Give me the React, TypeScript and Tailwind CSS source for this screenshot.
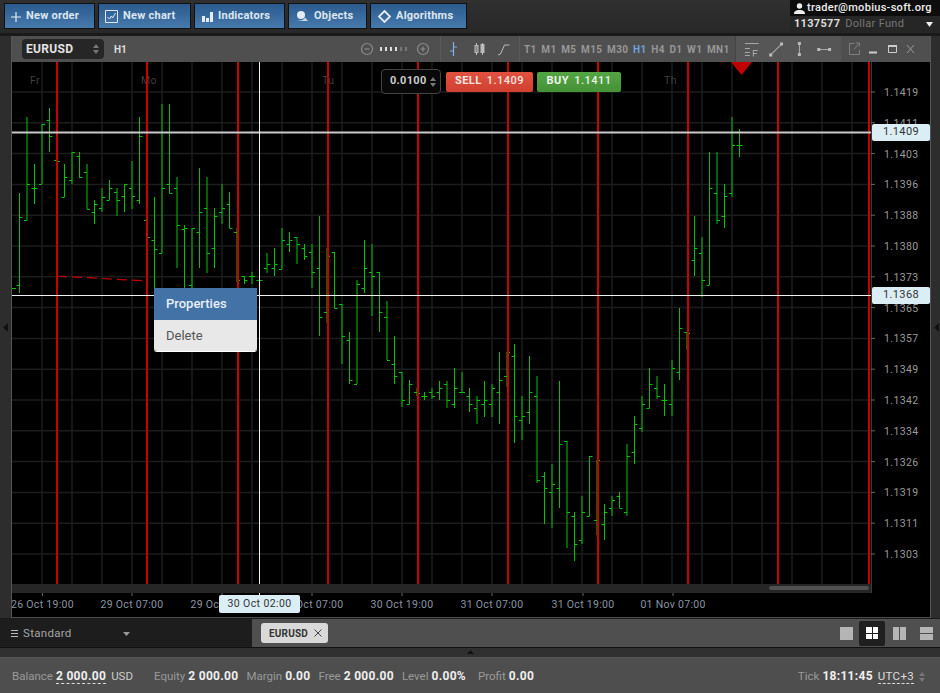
import type { ReactNode } from "react";

// [high, low, open, close] in screen pixels, one bar every 7.5px from x=19.5
const BARS: number[][] = [
  [193, 293, 285, 217], [117, 220, 220, 184], [164, 204, 188, 188], [124, 184, 184, 124], [108, 152, 120, 136],
  [140, 190, 160, 161], [164, 197, 197, 177], [152, 184, 180, 152], [152, 178, 156, 177], [164, 209, 172, 209],
  [200, 224, 212, 204], [188, 212, 208, 197], [180, 200, 200, 188], [188, 216, 192, 200], [184, 212, 196, 184],
  [161, 209, 188, 196], [117, 204, 200, 136], [200, 250, 220, 237], [197, 290, 240, 249], [104, 253, 253, 188],
  [104, 193, 184, 193], [177, 268, 188, 225], [225, 290, 229, 228], [228, 290, 285, 228], [168, 268, 232, 212],
  [177, 273, 208, 253], [208, 268, 248, 216], [184, 224, 212, 208], [192, 228, 204, 228], [228, 282, 232, 280],
  [276, 284, 276, 280], [272, 284, 276, 276], [279, 281, 280, 280], [253, 273, 268, 264], [248, 276, 268, 264],
  [228, 269, 269, 240], [232, 252, 244, 240], [237, 264, 237, 244], [244, 260, 248, 256], [244, 288, 252, 272],
  [216, 336, 268, 317], [248, 323, 312, 256], [252, 308, 252, 308], [304, 364, 304, 336], [332, 384, 340, 380],
  [280, 384, 384, 284], [240, 293, 288, 268], [244, 316, 272, 276], [272, 332, 272, 312], [301, 360, 317, 360],
  [336, 384, 364, 376], [372, 407, 372, 400], [380, 404, 404, 384], [388, 396, 392, 393], [392, 400, 396, 396],
  [388, 399, 392, 396], [381, 400, 392, 388], [381, 408, 384, 400], [368, 408, 404, 388], [372, 392, 392, 392],
  [388, 412, 396, 404], [396, 424, 408, 400], [381, 417, 404, 400], [384, 417, 404, 388], [352, 424, 392, 380],
  [352, 387, 376, 352], [344, 443, 356, 416], [396, 440, 420, 416], [356, 424, 412, 392], [376, 483, 396, 480],
  [472, 524, 476, 488], [464, 528, 492, 484], [381, 508, 488, 444], [441, 548, 441, 512], [512, 561, 516, 544],
  [496, 544, 540, 512], [456, 516, 516, 456], [460, 535, 520, 460], [504, 540, 524, 512], [496, 516, 508, 500],
  [492, 508, 496, 508], [444, 516, 512, 456], [416, 464, 452, 424], [396, 432, 428, 404], [368, 408, 408, 384],
  [376, 399, 388, 396], [384, 416, 400, 400], [360, 416, 404, 368], [308, 380, 372, 328], [332, 350, 332, 333],
  [216, 276, 260, 248], [237, 297, 253, 280], [152, 285, 285, 188], [152, 224, 193, 220], [184, 228, 216, 196],
  [117, 197, 193, 145], [129, 157, 145, 145],
];

const RED_LINES = [57, 147, 238, 328, 418, 508, 598, 688, 778, 869];
const V_GRID = Array.from({ length: 28 }, (_, i) => 42 + i * 30);
const PRICES = ["1.1419", "1.1411", "1.1403", "1.1396", "1.1388", "1.1380", "1.1373", "1.1365", "1.1357", "1.1349", "1.1342", "1.1334", "1.1326", "1.1319", "1.1311", "1.1303"];
const TIMES: [number, string][] = [
  [42.5, "26 Oct 19:00"], [132, "29 Oct 07:00"], [222, "29 Oct 19:00"], [312, "30 Oct 07:00"],
  [402, "30 Oct 19:00"], [492, "31 Oct 07:00"], [583, "31 Oct 19:00"], [673, "01 Nov 07:00"],
];
const TIMEFRAMES = ["T1", "M1", "M5", "M15", "M30", "H1", "H4", "D1", "W1", "MN1"];

function priceY(i: number) {
  return 92 + i * 30.8;
}

function TopButton({ icon, label, width }: { icon: ReactNode; label: string; width: string }) {
  return (
    <button className={`flex h-[26px] ${width} items-center gap-[5px] border border-[#111] bg-gradient-to-b from-[#2a5a8e] to-[#477aac] pl-[6px] text-[11px] font-bold tracking-[0.25px] text-[#dde6f0]`}>
      {icon}
      <span className="pt-px">{label}</span>
    </button>
  );
}

function Updown({ className = "" }: { className?: string }) {
  return (
    <svg width="6" height="12" viewBox="0 0 6 12" className={className}>
      <path d="M0 5l3-4 3 4z M0 7l3 4 3-4z" fill="#777" />
    </svg>
  );
}

function TitleBar() {
  return (
    <div className="flex h-[26px] items-center bg-[#4f4f4f] text-[10px] font-bold">
      <div className="ml-[10px] flex h-[20px] w-[82px] items-center justify-between rounded-[4px] bg-[#262626] pl-[4px] pr-[5px] text-[12px] tracking-[0.3px] text-[#e2e2e2]">
        EURUSD
        <Updown />
      </div>
      <span className="ml-[10px] w-[247px] text-[#ddd]">H1</span>
      <svg width="72" height="16" viewBox="0 0 72 16" className="w-[72px]">
        <g fill="none" stroke="#8c8c8c" strokeWidth="1.2">
          <circle cx="6" cy="8" r="5.5" />
          <path d="M3.5 8h5" />
          <circle cx="62" cy="8" r="5.5" />
          <path d="M59.5 8h5M62 5.5v5" />
        </g>
        <path d="M19 6h2v4h-2zM24 6h2v4h-2zM29 6h2v4h-2zM34 6h2v4h-2z" fill="#ddd" />
        <path d="M39 6h2v4h-2zM44 6h2v4h-2z" fill="#777" />
      </svg>
      <div className="ml-[7px] h-full w-px bg-[#5a5a5a]" />
      <svg width="78" height="18" viewBox="2 0 78 18" className="w-[78px]">
        <path d="M14.5 2v14M11 11h3.500M14.500 7H18" stroke="#7fb2e5" strokeWidth="1.2" fill="none" />
        <g stroke="#bbb" fill="none">
          <path d="M37.5 3v12M43.5 3v12" />
          <rect x="36" y="5.500" width="3" height="7" fill="#888" />
          <rect x="42" y="4.500" width="3" height="8" fill="#bbb" />
          <path d="M59 15l2.500-1 4-9h5" strokeWidth="1" />
        </g>
      </svg>
      <div className="flex h-full w-[216px] items-center gap-[4.7px] border-l border-[#5a5a5a] bg-[#4f4f4f] pl-[4px] tracking-[0.35px] text-[#979797]">
        {TIMEFRAMES.map((t) => (
          <span key={t} className={t === "H1" ? "text-[#6ea4dc]" : ""}>
            {t}
          </span>
        ))}
      </div>
      <div className="flex h-full w-[106px] items-center border-l border-[#444] bg-[#565656]">
        <svg width="106" height="18" viewBox="0 0 106 18">
          <g stroke="#aaa" fill="none">
            <path d="M9 3.500h14M9 8.500h5M9 12.500h5M9 15.500h5" strokeWidth="1" />
            <path d="M35 15L46 4" strokeWidth="1.1" />
            <path d="M64 4v10M84 9.500h10" strokeWidth="1.1" />
          </g>
          <path d="M17 10h5v1h-4v2h3v1h-3v2.500h-1z" fill="#aaa" />
          <path d="M33.500 13.500h3v3h-3zM44.500 2.500h3v3h-3zM62.500 2h3v3h-3zM62.500 13h3v3h-3zM82 8h3v3h-3zM93 8h3v3h-3z" fill="#bbb" />
        </svg>
      </div>
      <div className="flex h-full w-[88px] items-center bg-[#4f4f4f]">
        <svg width="80" height="18" viewBox="0 0 80 18">
          <g stroke="#808080" fill="none" strokeWidth="1">
            <path d="M13.500 3.500h-5v11h10v-5" />
            <path d="M13 9.500l5-6M15 3h3.500v3.500" />
            <path d="M66 5l7 8M73 5l-7 8" stroke="#999" />
          </g>
          <path d="M28 11.500h8v2h-8z" fill="#ccc" />
          <path d="M47.500 5.500h8v7h-8z" fill="none" stroke="#ccc" />
          <path d="M47 5h9v2h-9z" fill="#ccc" />
        </svg>
      </div>
    </div>
  );
}

function Chart() {
  return (
    <svg
      width="918"
      height="556"
      viewBox="12 62 918 556"
      className="block"
      fontFamily="Roboto, sans-serif"
      fontSize="10.500"
      letterSpacing="0.4"
    >
      <rect x="12" y="62" width="918" height="556" fill="#000" />
      <g stroke="#1d1d1d" strokeWidth="1.500">
        {V_GRID.map((x) => (
          <line key={x} x1={x} x2={x} y1="62" y2="584" />
        ))}
        {PRICES.map((p, i) => (
          <line key={p} x1="12" x2="871" y1={priceY(i)} y2={priceY(i)} />
        ))}
      </g>
      <g fill="#3f3f3f">
        <text x="30" y="84">Fr</text>
        <text x="141" y="84">Mo</text>
        <text x="322" y="84">Tu</text>
        <text x="664" y="84">Th</text>
      </g>
      <g stroke="#00c400" fill="none">
        {BARS.map(([hi, lo, o, c], i) => {
          const x = 19.5 + i * 7.5;
          return (
            <path
              key={i}
              d={`M${x} ${hi}V${lo}M${x - 3} ${o + 0.5}H${x}M${x} ${c + 0.5}H${x + 3}`}
            />
          );
        })}
        <path d="M12 288.500H16" />
      </g>
      <g stroke="#c80000" strokeWidth="2">
        {RED_LINES.map((x) => (
          <line key={x} x1={x} x2={x} y1="62" y2="584" />
        ))}
      </g>
      <path d="M57 276L147 281" stroke="#c80000" strokeWidth="1.200" strokeDasharray="10 5" />
      <path d="M731 62h21l-10.500 13z" fill="#c00000" />
      <path d="M12 132.500H871" stroke="#c9c9c9" strokeWidth="2" />
      <path d="M12 295.500H871M259.500 62V595" stroke="#f0f0f0" />
      <rect x="12" y="584" width="859" height="9" fill="#262626" />
      <rect x="769" y="586" width="100" height="4" rx="2" fill="#505050" />
      <path d="M871.500 62V593" stroke="#3a3a3a" />
      <g stroke="#666">
        {PRICES.map((p, i) => (
          <line key={p} x1="871" x2="875" y1={priceY(i)} y2={priceY(i)} />
        ))}
        {TIMES.map(([x]) => (
          <line key={x} x1={x} x2={x} y1="593" y2="596" />
        ))}
      </g>
      <g fill="#9a9a9a">
        {PRICES.map((p, i) => (
          <text key={p} x="884" y={priceY(i) + 4}>{p}</text>
        ))}
      </g>
      <g fill="#8795a3" textAnchor="middle" letterSpacing="0.3">
        {TIMES.map(([x, t]) => (
          <text key={t} x={x} y="608">{t}</text>
        ))}
      </g>
      <path d="M12 617.500H930" stroke="#4a4a4a" />
    </svg>
  );
}

function PriceTag({ value, top }: { value: string; top: string }) {
  return (
    <div className={`absolute left-[860px] ${top} flex h-[17px] w-[58px] items-center justify-center rounded-[2px] bg-[#dceef5] text-[11px] tracking-[0.4px] text-[#333]`}>
      {value}
    </div>
  );
}

function StatusItem({ label, value, dashed, suffix }: { label: string; value: string; dashed?: boolean; suffix?: string }) {
  return (
    <span className="flex items-baseline gap-[3px]">
      <span className="text-[#999]">{label}</span>
      <span className={`text-[12px] font-bold tracking-[0.3px] text-[#eee] ${dashed ? "border-b border-dashed border-[#ddd] leading-[13px]" : ""}`}>
        {value}
      </span>
      {suffix ? <span className="ml-[2px] text-[#ccc]">{suffix}</span> : null}
    </span>
  );
}

export default function App() {
  return (
    <div className="flex h-[693px] w-[940px] flex-col overflow-hidden bg-[#1a1a1a] font-[Roboto,sans-serif]">
      {/* top toolbar */}
      <div className="flex h-[33px] items-start justify-between bg-gradient-to-b from-[#303030] to-[#282828]">
        <div className="flex gap-[3px] pl-[4px] pt-[3px]">
          <TopButton
            width="w-[91px]"
            label="New order"
            icon={
              <svg width="10" height="10" viewBox="0 0 10 10" className="mt-[2px]">
                <path d="M5 0v10M0 5h10" stroke="#e4ebf3" strokeWidth="1.200" />
              </svg>
            }
          />
          <TopButton
            width="w-[93px]"
            label="New chart"
            icon={
              <svg width="13" height="13" viewBox="0 0 13 13">
                <path d="M.5.500h12v12H.5z" fill="none" stroke="#dde6f0" />
                <path d="M2.500 7l2 2 2-3 1 2 3-5" fill="none" stroke="#dde6f0" />
              </svg>
            }
          />
          <TopButton
            width="w-[91px]"
            label="Indicators"
            icon={
              <svg width="11" height="11" viewBox="0 0 11 11" className="ml-[1px]">
                <path d="M0 5h3v6H0zM4 7h3v4H4zM8 1h3v10H8z" fill="#e4ebf3" />
              </svg>
            }
          />
          <TopButton
            width="w-[79px]"
            label="Objects"
            icon={
              <svg width="13" height="12" viewBox="0 0 13 12" className="ml-[1px]">
                <circle cx="5" cy="5" r="4" fill="#e4ebf3" />
                <path d="M1 11h11L9 7.500c-1 2-3 3-5 3z" fill="#c9d6e3" />
              </svg>
            }
          />
          <TopButton
            width="w-[97px]"
            label="Algorithms"
            icon={
              <svg width="13" height="13" viewBox="0 0 13 13" className="ml-[1px]">
                <path d="M6.500 1l5.500 5.500-5.500 5.500L1 6.500z" fill="none" stroke="#e4ebf3" strokeWidth="1.800" />
              </svg>
            }
          />
        </div>
        <div className="w-[150px] text-[11px]">
          <div className="flex h-[16px] items-center gap-[2px] bg-[#0d0d0d] pl-[4px] font-medium tracking-[0.3px] text-[#eee]">
            <svg width="11" height="11" viewBox="0 0 11 11">
              <circle cx="5.500" cy="3" r="2.700" fill="#eee" />
              <path d="M0 11c0-3 2-4 5.500-4S11 8 11 11z" fill="#eee" />
            </svg>
            trader@mobius-soft.org
          </div>
          <div className="flex h-[16px] items-center gap-[5px] bg-[#262626] pl-[4px] tracking-[0.3px]">
            <span className="font-bold text-[#ddd]">1137577</span>
            <span className="flex-1 text-[#777]">Dollar Fund</span>
            <svg width="7" height="5" viewBox="0 0 7 5" className="mr-[7px]">
              <path d="M0 0h7L3.500 5z" fill="#eee" />
            </svg>
          </div>
        </div>
      </div>

      {/* chart window between the side strips */}
      <div className="mt-[3px] flex h-[582px]">
        <div className="flex w-[12px] items-center border-r border-[#555] bg-[#2d2d2d]">
          <svg width="5" height="9" viewBox="0 0 5 9" className="ml-[3px]">
            <path d="M5 0v9L0 4.500z" fill="#111" />
          </svg>
        </div>
        <div className="relative w-[918px]">
          <TitleBar />
          <Chart />
          {/* order panel */}
          <div className="absolute left-[369px] top-[33px] flex items-center text-[11px] font-bold tracking-[0.5px]">
            <div className="flex h-[25px] w-[60px] items-center justify-between rounded-[4px] border border-[#444] bg-[#080808] pl-[8px] pr-[4px] tracking-[0.3px] text-[#ccc]">
              0.0100
              <Updown />
            </div>
            <div className="ml-[5px] flex h-[20px] w-[87px] items-center justify-center gap-[5px] rounded-[2px] bg-gradient-to-b from-[#e35240] to-[#cf4030] text-[#f5e6e3]">
              SELL <span className="font-medium">1.1409</span>
            </div>
            <div className="ml-[4px] flex h-[20px] w-[84px] items-center justify-center gap-[5px] rounded-[2px] bg-gradient-to-b from-[#54a544] to-[#459137] text-[#eef5ec]">
              BUY <span className="font-medium">1.1411</span>
            </div>
          </div>
          <PriceTag value="1.1409" top="top-[88px]" />
          <PriceTag value="1.1368" top="top-[251px]" />
          <div className="absolute left-[207px] top-[559px] flex h-[18px] w-[81px] items-center justify-center rounded-[2px] bg-[#dceef5] text-[10.5px] tracking-[0.4px] text-[#333]">
            30 Oct 02:00
          </div>
          {/* context menu */}
          <div className="absolute left-[142px] top-[252px] w-[103px] overflow-hidden rounded-b-[3px] text-[13px] shadow-[0_1px_0_#fff]">
            <div className="flex h-[32px] items-center bg-[#4272a6] pl-[12px] font-medium text-[#e8eff6]">Properties</div>
            <div className="flex h-[31px] items-center bg-[#e8e8e8] pl-[12px] text-[#555]">Delete</div>
          </div>
        </div>
        <div className="flex w-[10px] items-center border-l border-[#555] bg-[#2d2d2d]">
          <svg width="5" height="9" viewBox="0 0 5 9" className="ml-[3px]">
            <path d="M5 0v9L0 4.500z" fill="#111" />
          </svg>
        </div>
      </div>

      {/* tab bar */}
      <div className="mt-px flex h-[29px] border-b border-[#111] bg-[#4f4f4f]">
        <div className="flex w-[252px] items-center bg-[#1d1d1d] pl-[11px] pt-px text-[11.500px] tracking-[0.3px] text-[#a5a5a5]">
          <svg width="7" height="7" viewBox="0 0 7 7">
            <path d="M0 .500h7M0 3.500h7M0 6.500h7" stroke="#bbb" />
          </svg>
          <span className="ml-[5px] w-[100px]">Standard</span>
          <svg width="7" height="4" viewBox="0 0 7 4">
            <path d="M0 0h7L3.500 4z" fill="#999" />
          </svg>
        </div>
        <div className="flex flex-1 items-center justify-between pl-[9px] pr-[7px]">
          <div className="flex h-[20px] w-[67px] items-center gap-[6px] rounded-[3px] bg-[#d9d9d9] pl-[8px] text-[10px] font-bold tracking-[0.2px] text-[#333]">
            EURUSD
            <svg width="8" height="8" viewBox="0 0 8 8">
              <path d="M.5.500l7 7M7.500.500l-7 7" stroke="#444" />
            </svg>
          </div>
          <div className="flex items-center gap-[6px]">
            <div className="h-[13px] w-[13px] bg-[#b5b5b5]" />
            <div className="flex h-[25px] w-[26px] items-center justify-center rounded-[2px] bg-[#1f1f1f]">
              <div className="grid h-[12px] w-[12px] grid-cols-2 gap-px">
                <div className="bg-white" />
                <div className="bg-white" />
                <div className="bg-white" />
                <div className="bg-white" />
              </div>
            </div>
            <div className="ml-[2px] flex h-[13px] w-[13px] gap-px">
              <div className="flex-1 bg-[#b5b5b5]" />
              <div className="flex-1 bg-[#b5b5b5]" />
            </div>
            <div className="ml-[8px] flex h-[13px] w-[13px] flex-col gap-px">
              <div className="flex-1 bg-[#b5b5b5]" />
              <div className="flex-1 bg-[#b5b5b5]" />
            </div>
          </div>
        </div>
      </div>

      {/* splitter */}
      <div className="flex h-[10px] justify-center border-b border-[#555] bg-[#303030]">
        <svg width="7" height="4" viewBox="0 0 7 4" className="mt-[2px]">
          <path d="M0 4h7L3.500 0z" fill="#111" />
        </svg>
      </div>

      {/* status bar */}
      <div className="flex flex-1 items-center justify-between bg-[#4e4e4e] pl-[12px] pr-[15px] pt-[2px] text-[11.500px]">
        <div className="flex items-baseline">
          <StatusItem label="Balance" value="2 000.00" dashed suffix="USD" />
          <div className="ml-[21px] flex items-baseline gap-[8px]">
            <StatusItem label="Equity" value="2 000.00" />
            <StatusItem label="Margin" value="0.00" />
            <StatusItem label="Free" value="2 000.00" />
            <StatusItem label="Level" value="0.00%" />
            <div className="ml-[4px]">
              <StatusItem label="Profit" value="0.00" />
            </div>
          </div>
        </div>
        <div className="flex items-center gap-[5px]">
          <StatusItem label="Tick" value="18:11:45" />
          <span className="border-b border-dashed border-[#ddd] leading-[13px] tracking-[0.3px] text-[#ddd]">UTC+3</span>
          <Updown />
        </div>
      </div>
    </div>
  );
}
